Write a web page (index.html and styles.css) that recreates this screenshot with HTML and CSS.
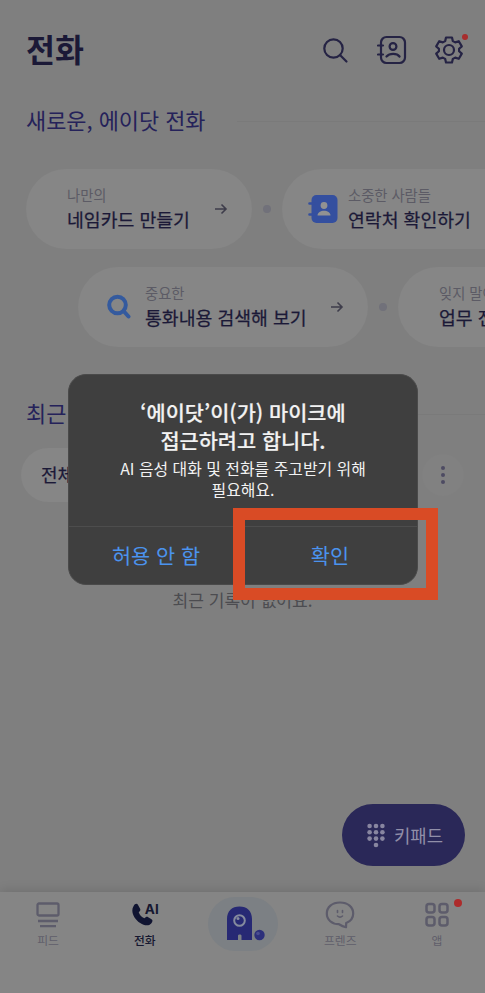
FILE: index.html
```html
<!DOCTYPE html>
<html lang="ko">
<head>
    <meta charset="UTF-8">
    <meta name="viewport" content="width=device-width, initial-scale=1.0">
    <title>전화</title>
    <link rel="stylesheet" href="styles.css">
</head>
<body>

<div class="phone">
    <header class="header">
        <h1>전화</h1>
        <div class="header-icons">
            <svg width="30" height="30" viewBox="0 0 30 30" class="line-icon">
                <circle cx="13.5" cy="13.5" r="9.2"/>
                <path d="M20 20l6.5 6.5"/>
            </svg>
            <svg width="30" height="30" viewBox="0 0 30 30" class="line-icon">
                <rect x="4" y="2" width="24" height="26" rx="5.5"/>
                <path d="M1 10.5h5M1 19.500h5M9.500 21.500c3-3.500 10.500-3.500 13 0"/>
                <circle cx="16" cy="11.500" r="3.400"/>
            </svg>
            <div class="gear">
                <svg width="30" height="30" viewBox="0 0 30 30" class="line-icon">
                    <path d="M12 2.500h6l.8 3.600 2.400 1.300 3.600-1.200 3 5.200-2.700 2.400v2.400l2.700 2.400-3 5.200-3.600-1.200-2.400 1.300-.8 3.600h-6l-.8-3.600-2.400-1.300-3.600 1.200-3-5.200 2.700-2.400v-2.400l-2.700-2.400 3-5.200 3.600 1.200 2.400-1.300z"/>
                    <circle cx="15" cy="15" r="5"/>
                </svg>
                <span class="red-dot"></span>
            </div>
        </div>
    </header>

    <div class="section-title">
        <h2>새로운, 에이닷 전화</h2>
        <span class="rule"></span>
    </div>

    <!-- Shortcut cards -->
    <div class="cards">
        <div class="card name-card">
            <div class="card-text"><small>나만의</small><b>네임카드 만들기</b></div>
            <svg class="arrow" width="14" height="12" viewBox="0 0 14 12"><path d="M1 6h11M7.500 1.500L12 6l-4.500 4.500"/></svg>
        </div>
        <span class="dot"></span>
        <div class="card contact-card">
            <svg width="30" height="30" viewBox="0 0 30 30">
                <rect x="3.500" y="1" width="26" height="28" rx="5" fill="#344f9f"/>
                <path d="M1.500 9.500H6M1.500 20.500H6" stroke="#344f9f" stroke-width="2.600" stroke-linecap="round"/>
                <circle cx="16" cy="11.500" r="3.400" fill="#929292"/>
                <path d="M9.500 21.500c0-6.500 13-6.500 13 0z" fill="#929292"/>
            </svg>
            <div class="card-text"><small>소중한 사람들</small><b>연락처 확인하기</b></div>
        </div>
    </div>
    <div class="cards second">
        <div class="card search-card">
            <svg width="24" height="26" viewBox="0 0 24 26" fill="none" stroke="#345a9e" stroke-width="4" stroke-linecap="round">
                <circle cx="10.500" cy="11" r="8.300"/>
                <path d="M17 17.500l4.500 5"/>
            </svg>
            <div class="card-text"><small>중요한</small><b>통화내용 검색해 보기</b></div>
            <svg class="arrow" width="14" height="12" viewBox="0 0 14 12"><path d="M1 6h11M7.500 1.500L12 6l-4.500 4.500"/></svg>
        </div>
        <span class="dot"></span>
        <div class="card work-card">
            <div class="card-text"><small>잊지 말아야 할</small><b>업무 전화하기</b></div>
        </div>
    </div>

    <div class="section-title recent">
        <h2>최근 기록</h2>
        <span class="rule"></span>
    </div>
    <div class="filter">
        <div class="filter-all">전체</div>
        <div class="more"><i></i><i></i><i></i></div>
    </div>
    <p class="empty">최근 기록이 없어요.</p>

    <div class="keypad">
        <svg width="18" height="25" viewBox="0 0 18 25" fill="#8886a0">
            <circle cx="2.600" cy="3" r="2.300"/><circle cx="9" cy="3" r="2.300"/><circle cx="15.400" cy="3" r="2.300"/>
            <circle cx="2.600" cy="9.300" r="2.300"/><circle cx="9" cy="9.300" r="2.300"/><circle cx="15.400" cy="9.300" r="2.300"/>
            <circle cx="2.600" cy="15.600" r="2.300"/><circle cx="9" cy="15.600" r="2.300"/><circle cx="15.400" cy="15.600" r="2.300"/>
            <circle cx="9" cy="22" r="2.300"/>
        </svg>
        <span>키패드</span>
    </div>

    <!-- Bottom navigation -->
    <nav class="tabs">
        <div class="tab">
            <svg width="26" height="28" viewBox="0 0 26 28" fill="none" stroke="#5d5c6b" stroke-width="2.300">
                <rect x="2.500" y="2.500" width="21" height="12" rx="1.500"/>
                <path d="M3 20h20M5 25.200h16"/>
            </svg>
            <span>피드</span>
        </div>
        <div class="tab active">
            <div class="call-icon">
                <svg width="23" height="25" viewBox="0 0 23 25">
                    <path d="M2.500 4.200C4 1.500 6 1 7.200 3.200l1.900 3.500c.7 1.500-.2 2.500-1.400 3.600 1 2.800 3 5 5.700 6 1.300-1.200 2.300-2 3.800-1.100l3.300 2c1.500 1 1.200 2.500-.3 4.200-2.500 2.900-7 2.200-11-.4C3.300 17.300-.8 9.500 2.500 4.200z" fill="#101431"/>
                </svg>
                <strong>AI</strong>
            </div>
            <span>전화</span>
        </div>
        <div class="tab-home">
            <svg width="44" height="38" viewBox="0 0 44 38">
                <path d="M6 35V14C6 6 11 1.500 18.500 1.500S31 6 31 14v21H20.500v-4.500c0-1.500-3.500-1.500-3.500 0V35z" fill="#272974"/>
                <circle cx="18.500" cy="15.500" r="5.300" fill="#272974" stroke="#858b9e" stroke-width="2"/>
                <circle cx="17" cy="13.500" r="1.500" fill="#858b9e"/>
                <circle cx="38.500" cy="30" r="5.200" fill="#2d307b"/>
                <circle cx="37" cy="28.500" r="1.800" fill="#4b4e90"/>
            </svg>
        </div>
        <div class="tab">
            <svg width="30" height="28" viewBox="0 0 30 28" fill="none" stroke="#5d5c6b" stroke-width="2.200" stroke-linecap="round" stroke-linejoin="round">
                <path d="M15 1.500C7 1.500 1.800 6.200 1.800 12.500S7 23.200 14 23.200c2 1.200 4.200 2.300 7 3l.2-4.200c4.500-1.800 7-5.200 7-9.500C28.200 6.200 23 1.500 15 1.500z"/>
                <path d="M12.500 9.500v2M17.500 9.500v2M12.500 15c1.500 1.300 3.500 1.300 5 0" stroke-width="1.600"/>
            </svg>
            <span>프렌즈</span>
        </div>
        <div class="tab">
            <svg width="26" height="28" viewBox="0 0 26 28" fill="none" stroke="#5d5c6b" stroke-width="2.500">
                <rect x="2.500" y="3" width="8" height="8.500" rx="2.500"/><rect x="15.500" y="3" width="8" height="8.500" rx="2.500"/>
                <rect x="2.500" y="16" width="8" height="8.500" rx="2.500"/><rect x="15.500" y="16" width="8" height="8.500" rx="2.500"/>
            </svg>
            <span>앱</span>
            <i class="badge"></i>
        </div>
    </nav>

    <!-- Permission dialog -->
    <div class="dialog">
        <div class="dialog-body">
            <h3>‘에이닷’이(가) 마이크에<br>접근하려고 합니다.</h3>
            <p>AI 음성 대화 및 전화를 주고받기 위해<br>필요해요.</p>
        </div>
        <div class="dialog-buttons">
            <button>허용 안 함</button>
            <button>확인</button>
        </div>
    </div>
    <div class="marker"></div>
</div>

</body>
</html>
```
FILE: styles.css
```css
* {
    box-sizing: border-box;
}

body {
    margin: 0;
    background: #7f7f7f;
    font-family: "Noto Sans CJK KR", sans-serif;
    color: #1b1937;
}

svg {
    display: block;
    flex-shrink: 0;
}

h1, h2, h3, p {
    margin: 0;
}

.phone {
    position: relative;
    display: flex;
    flex-direction: column;
    width: 485px;
    height: 993px;
    overflow: hidden;
}

.header {
    display: flex;
    justify-content: space-between;
    align-items: center;
    height: 100px;
    padding: 0 21px 0 26px;
}

h1 {
    padding-bottom: 4px;
    font-size: 31.5px;
    line-height: 40px;
    font-weight: 700;
}

.header-icons {
    display: flex;
    gap: 27px;
}

.line-icon {
    fill: none;
    stroke: #252344;
    stroke-width: 2.2;
    stroke-linecap: round;
    stroke-linejoin: round;
}

.gear {
    position: relative;
}

.red-dot {
    position: absolute;
    top: -1px;
    right: -4px;
    width: 6px;
    height: 6px;
    border-radius: 50%;
    background: #a82d2d;
}

/* Sections */
.section-title {
    display: flex;
    align-items: center;
    gap: 32px;
    height: 42px;
    padding-left: 26px;
}

h2 {
    padding-bottom: 2px;
    font-size: 21.9px;
    line-height: 32px;
    font-weight: 400;
    color: #25225a;
    white-space: nowrap;
}

.rule {
    flex: 1;
    height: 1px;
    background: #7a7a7a;
}

.cards {
    display: flex;
    align-items: center;
    height: 80px;
    margin-top: 27px;
    padding-left: 26px;
}

.cards.second {
    margin-top: 18px;
    padding-left: 78px;
}

.card {
    display: flex;
    align-items: center;
    flex-shrink: 0;
    height: 80px;
    border-radius: 40px;
    background: #868686;
}

.name-card {
    width: 226px;
    padding: 0 24px 0 41px;
}

.contact-card {
    width: 300px;
    padding-left: 26px;
    gap: 10px;
}

.search-card {
    width: 290px;
    padding: 0 24px 0 29px;
    gap: 14px;
}

.work-card {
    width: 300px;
    padding-left: 41px;
}

.card-text {
    display: flex;
    flex-direction: column;
    padding-bottom: 3px;
    white-space: nowrap;
}

.card-text small {
    font-size: 14.3px;
    line-height: 22px;
    color: #5c5b65;
}

.card-text b {
    font-size: 18.3px;
    line-height: 26px;
    font-weight: 400;
    -webkit-text-stroke: 0.25px #1b1937;
}

.arrow {
    margin-left: auto;
    fill: none;
    stroke: #3e3d4b;
    stroke-width: 1.6;
}

.dot {
    flex-shrink: 0;
    width: 8px;
    height: 8px;
    margin: 0 11px;
    border-radius: 50%;
    background: #71717a;
}

.recent {
    margin-top: 46px;
}

.filter {
    display: flex;
    justify-content: space-between;
    align-items: center;
    margin-top: 13px;
    padding: 0 21px;
}

.filter-all {
    width: 78px;
    height: 54px;
    padding-left: 20px;
    border-radius: 27px;
    background: #868686;
    font-size: 18px;
    line-height: 52px;
    -webkit-text-stroke: 0.25px #1b1937;
}

.more {
    display: flex;
    flex-direction: column;
    align-items: center;
    justify-content: center;
    gap: 3px;
    width: 42px;
    height: 42px;
    border-radius: 21px;
    background: #818181;
}

.more i {
    width: 4px;
    height: 4px;
    border-radius: 50%;
    background: #4d4b62;
}

.empty {
    margin-top: 83px;
    font-size: 17.1px;
    line-height: 30px;
    text-align: center;
    color: #4c4c50;
}

.keypad {
    display: flex;
    align-items: center;
    align-self: flex-end;
    gap: 9px;
    width: 123px;
    height: 62px;
    margin: auto 20px 26px 0;
    padding-left: 25px;
    border-radius: 31px;
    background: #2a2858;
    color: #918fa8;
    font-size: 17.8px;
    line-height: 26px;
}

.keypad span {
    padding-bottom: 1px;
}

/* Bottom tabs */
.tabs {
    display: flex;
    flex-shrink: 0;
    justify-content: space-between;
    height: 101px;
    padding: 5px 18px 0;
    background: #858585;
    box-shadow: 0 -2px 10px rgba(0, 0, 0, 0.12);
}

.tab {
    position: relative;
    display: flex;
    flex-direction: column;
    align-items: center;
    width: 60px;
    padding-top: 4px;
    color: #5f5e6a;
    font-size: 11.8px;
    line-height: 18px;
}

.tab:nth-child(2) {
    margin-left: 4px;
}

.tab:nth-child(4) {
    margin-right: 4px;
}

.tab span {
    margin-top: 2px;
}

.tab.active {
    color: #151730;
    font-weight: 500;
}

.call-icon {
    display: flex;
    height: 28px;
    padding-top: 1px;
}

.call-icon strong {
    margin: 1px 0 0 -9px;
    font-family: Inter, sans-serif;
    font-size: 13.5px;
    line-height: 12px;
    font-weight: 700;
}

.tab-home {
    display: flex;
    align-items: center;
    justify-content: center;
    width: 70px;
    height: 54px;
    border-radius: 27px;
    background: #7c8084;
}

.badge {
    position: absolute;
    top: 2px;
    right: 5px;
    width: 8px;
    height: 8px;
    border-radius: 50%;
    background: #ad2b2b;
}

/* Dialog */
.dialog {
    position: absolute;
    top: 374px;
    left: 68px;
    display: flex;
    flex-direction: column;
    width: 350px;
    height: 211px;
    border: 1px solid #4a4a4a;
    border-radius: 18px;
    overflow: hidden;
    background: #3f3f3f;
    text-align: center;
}

.dialog-body {
    flex: 1;
    padding-top: 23px;
    color: #f2f2f2;
}

.dialog h3 {
    font-size: 20.8px;
    line-height: 28px;
    font-weight: 500;
    -webkit-text-stroke: 0.2px #f2f2f2;
}

.dialog p {
    font-size: 15.9px;
    line-height: 21px;
    margin-top: 4px;
}

.dialog-buttons {
    display: flex;
    height: 58px;
    border-top: 1px solid #4d4d4d;
}

.dialog-buttons button {
    flex: 1;
    padding: 0 0 2px;
    border: none;
    background: none;
    color: #4b93ee;
    font-family: inherit;
    font-size: 20.8px;
    line-height: 30px;
}

.marker {
    position: absolute;
    top: 508px;
    left: 233px;
    width: 205px;
    height: 92px;
    border: 12px solid #d94b25;
}
```
